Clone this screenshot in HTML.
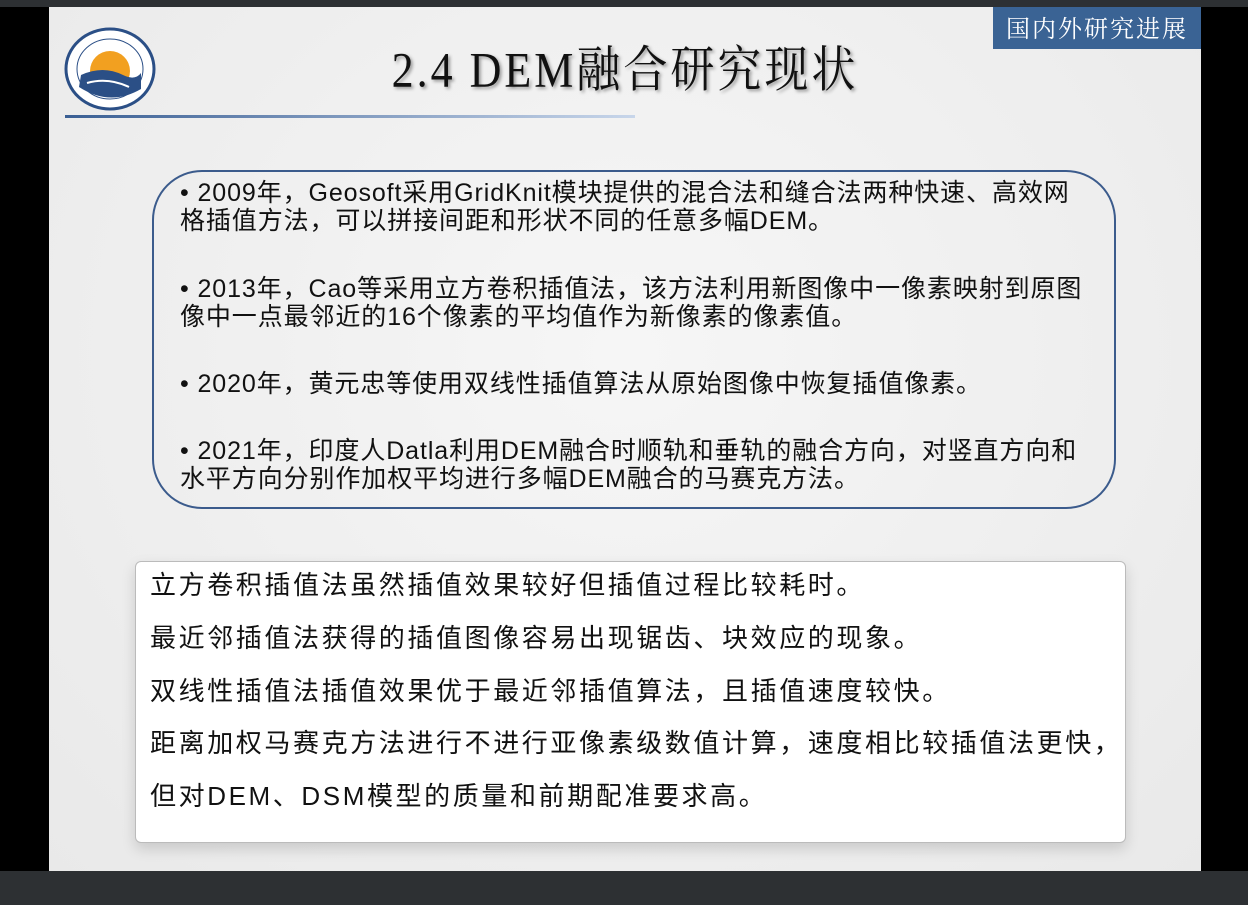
<!DOCTYPE html>
<html><head><meta charset="utf-8"><style>
body{margin:0;width:1248px;height:905px;background:#000;position:relative;overflow:hidden;font-family:"Liberation Sans","Noto Sans CJK SC",sans-serif}
.top{position:absolute;left:0;top:0;width:1248px;height:7px;background:#2d3033}
.bot{position:absolute;left:0;top:871px;width:1248px;height:34px;background:#2d3033}
.slide{position:absolute;left:49px;top:7px;width:1152px;height:864px;background:radial-gradient(ellipse at 50% 40%,#f6f6f6,#e9e9e9)}
.tag{position:absolute;left:944px;top:0;width:208px;height:42px;background:#3a6394;color:#fff;font:24px "Noto Serif CJK SC",serif;line-height:40px;text-align:center;letter-spacing:2px}
.title{position:absolute;left:0;width:1152px;top:26px;text-align:center;font:44px "Liberation Serif","Noto Serif CJK SC",serif;color:#111;text-shadow:2px 2px 3px #999;letter-spacing:3px;transform:scaleY(1.12)}
.line{position:absolute;left:16px;top:108px;width:570px;height:3px;background:linear-gradient(90deg,#3a5f94,#c8d6ea)}
.box1{position:absolute;left:103px;top:163px;width:960px;height:335px;border:2px solid #3b5b8c;border-radius:50px}
.t1{position:absolute;left:131px;font-size:25px;line-height:28px;color:#111;white-space:nowrap;letter-spacing:0.9px}
.box2{position:absolute;left:86px;top:554px;width:989px;height:280px;background:#fff;border:1px solid #bbb;border-radius:6px;box-shadow:0 6px 14px rgba(0,0,0,.15)}
.t2{position:absolute;left:101px;font-size:26px;color:#111;letter-spacing:2.6px;white-space:nowrap}
</style></head><body>
<div class="top"></div>
<div class="slide">
<svg style="position:absolute;left:14px;top:20px" width="94" height="84" viewBox="0 0 94 84">
<ellipse cx="47" cy="42" rx="44" ry="40" fill="#fff" stroke="#2b4f86" stroke-width="3"/>
<ellipse cx="47" cy="42" rx="33" ry="30" fill="#fff" stroke="#2b4f86" stroke-width="1"/>
<circle cx="47" cy="44" r="20" fill="#f2a020"/>
<path d="M18 48 Q40 38 60 48 Q72 54 78 46 L78 62 Q47 80 16 60Z" fill="#2b4f86"/>
<path d="M24 56 Q45 50 66 60" stroke="#fff" stroke-width="2" fill="none"/>
</svg>
<div class="line"></div>
<div class="title">2.4 DEM融合研究现状</div>
<div class="tag">国内外研究进展</div>
<div class="box1"></div>
<div class="t1" style="top:172px">• 2009年，Geosoft采用GridKnit模块提供的混合法和缝合法两种快速、高效网<br>格插值方法，可以拼接间距和形状不同的任意多幅DEM。</div>
<div class="t1" style="top:268px">• 2013年，Cao等采用立方卷积插值法，该方法利用新图像中一像素映射到原图<br>像中一点最邻近的16个像素的平均值作为新像素的像素值。</div>
<div class="t1" style="top:363px">• 2020年，黄元忠等使用双线性插值算法从原始图像中恢复插值像素。</div>
<div class="t1" style="top:430px">• 2021年，印度人Datla利用DEM融合时顺轨和垂轨的融合方向，对竖直方向和<br>水平方向分别作加权平均进行多幅DEM融合的马赛克方法。</div>
<div class="box2"></div>
<div class="t2" style="top:558px">立方卷积插值法虽然插值效果较好但插值过程比较耗时。</div>
<div class="t2" style="top:611px">最近邻插值法获得的插值图像容易出现锯齿、块效应的现象。</div>
<div class="t2" style="top:664px">双线性插值法插值效果优于最近邻插值算法，且插值速度较快。</div>
<div class="t2" style="top:716px">距离加权马赛克方法进行不进行亚像素级数值计算，速度相比较插值法更快，</div>
<div class="t2" style="top:769px">但对DEM、DSM模型的质量和前期配准要求高。</div>
</div>
<div class="bot"></div>
</body></html>
